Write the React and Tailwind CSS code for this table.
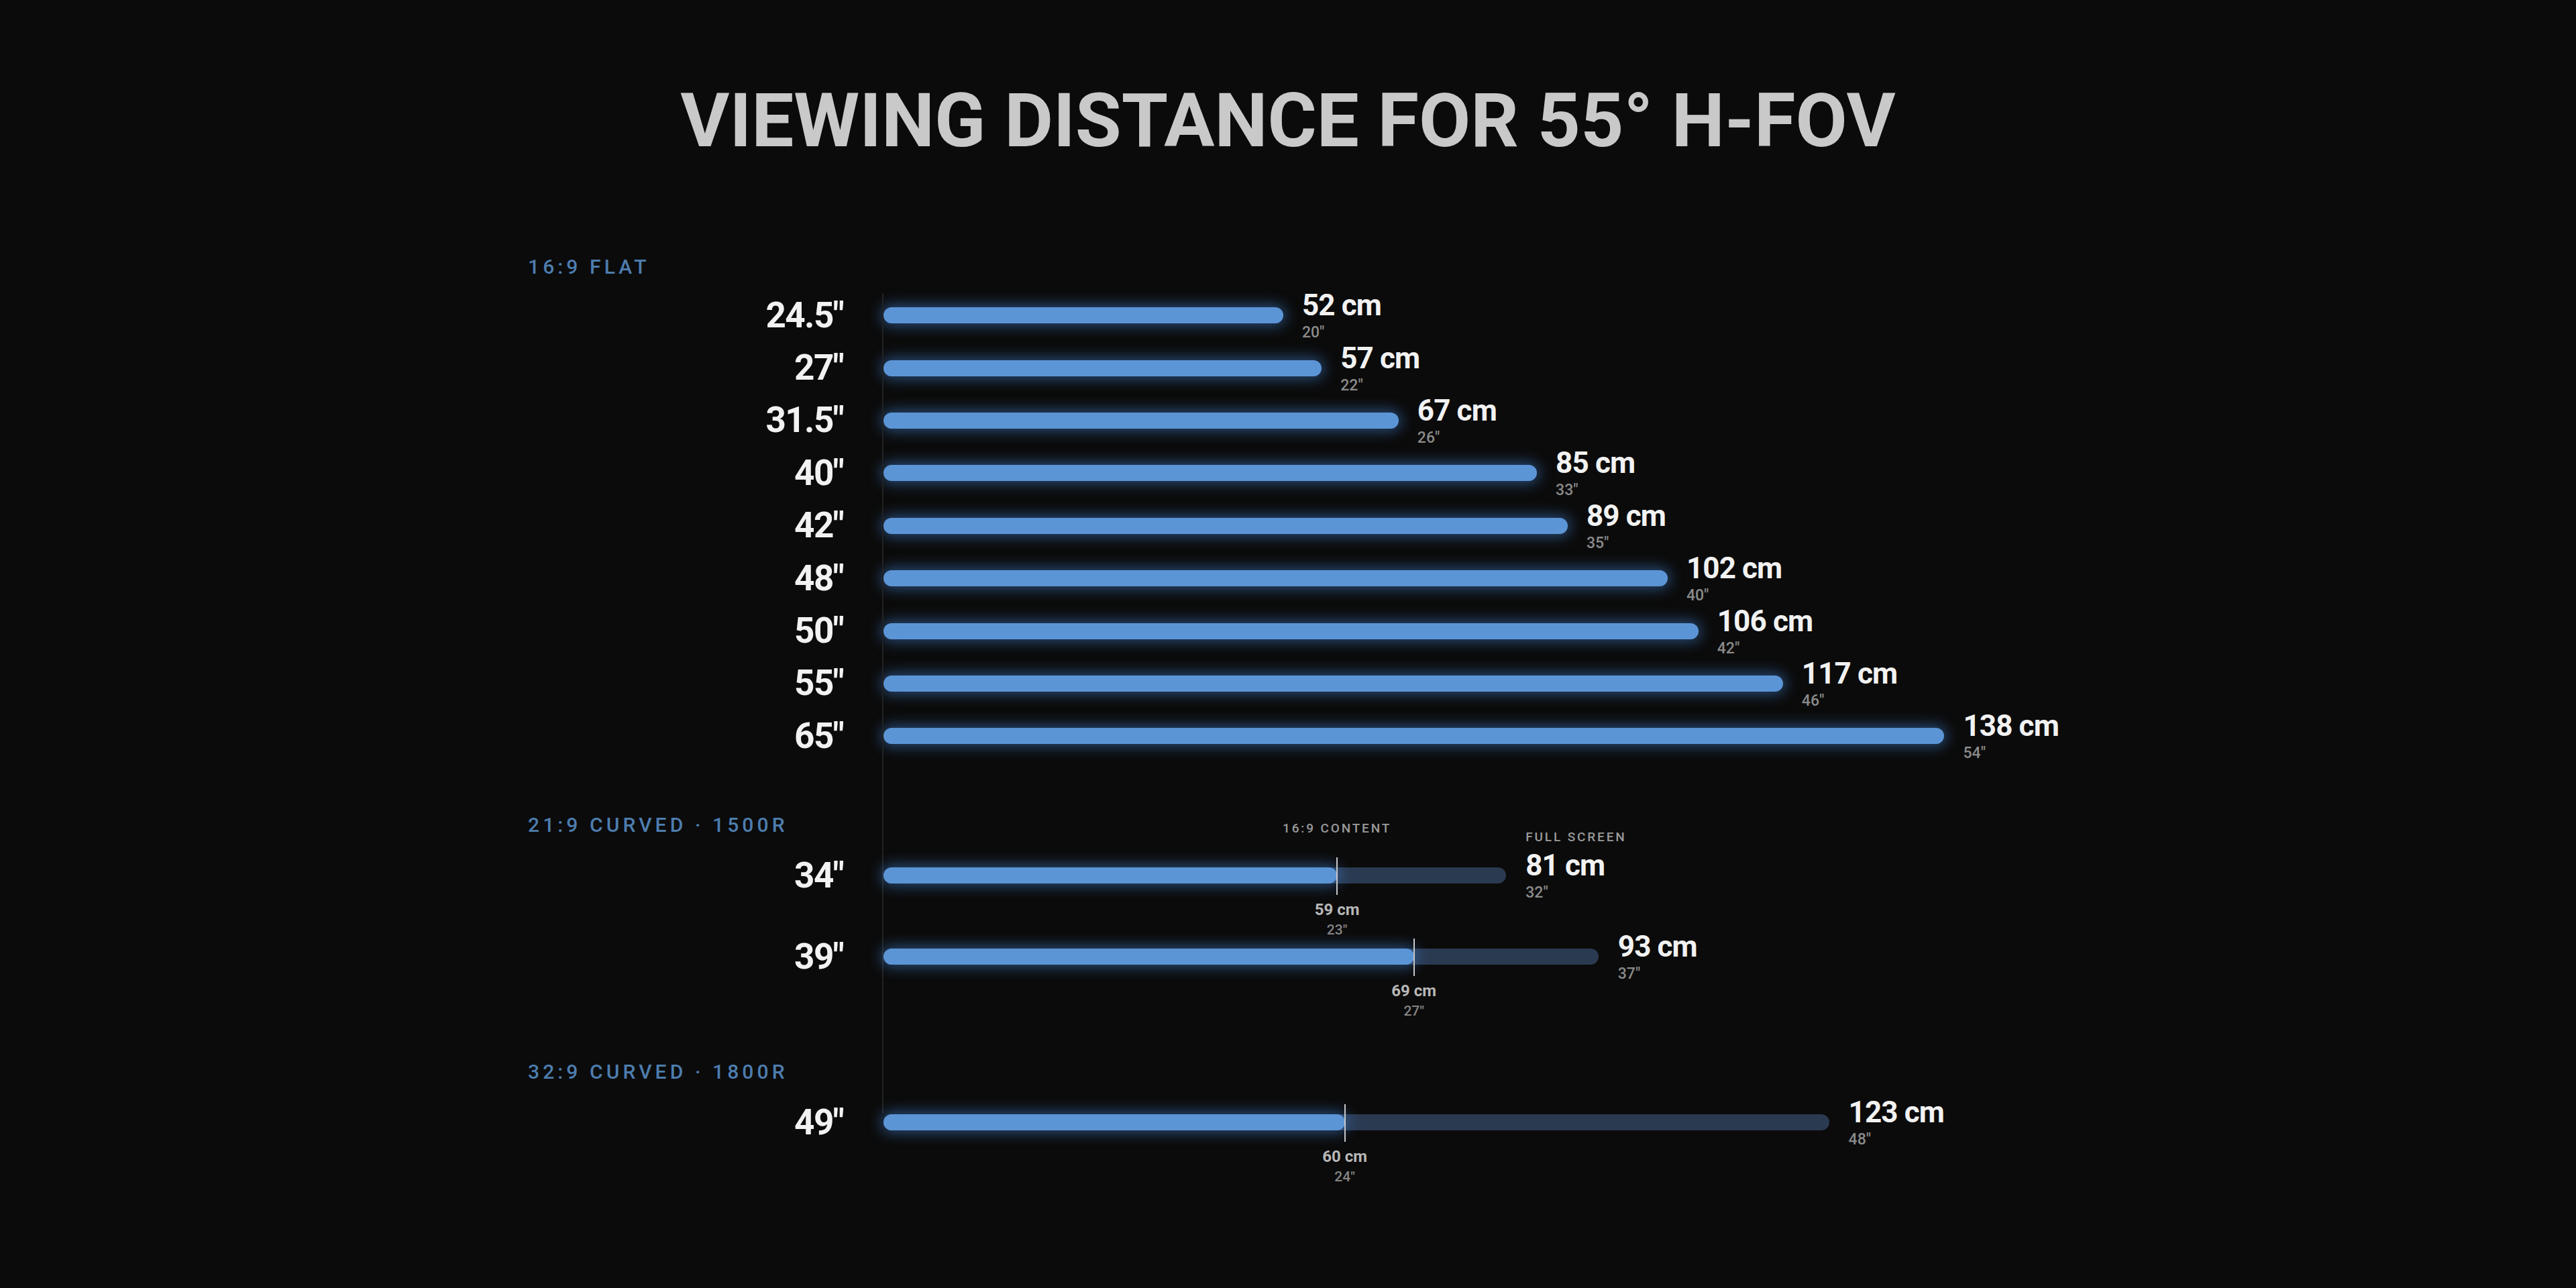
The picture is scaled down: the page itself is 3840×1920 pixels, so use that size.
const PX_PER_CM = 11.46;

const flat = [
  { size: '24.5"', cm: 52, inch: 20 },
  { size: '27"', cm: 57, inch: 22 },
  { size: '31.5"', cm: 67, inch: 26 },
  { size: '40"', cm: 85, inch: 33 },
  { size: '42"', cm: 89, inch: 35 },
  { size: '48"', cm: 102, inch: 40 },
  { size: '50"', cm: 106, inch: 42 },
  { size: '55"', cm: 117, inch: 46 },
  { size: '65"', cm: 138, inch: 54 },
];

const sections = [
  {
    title: '21:9 CURVED · 1500R',
    rows: [
      { size: '34"', cm: 81, inch: 32, partCm: 59, partInch: 23, captions: true },
      { size: '39"', cm: 93, inch: 37, partCm: 69, partInch: 27 },
    ],
  },
  {
    title: '32:9 CURVED · 1800R',
    rows: [{ size: '49"', cm: 123, inch: 48, partCm: 60, partInch: 24 }],
  },
];

function SectionLabel({ children }) {
  return (
    <div className="h-[30px] text-[30px] leading-none font-medium tracking-[0.17em] text-[#4d7dae]">
      {children}
    </div>
  );
}

function SizeLabel({ children }) {
  return (
    <div className="w-[470px] shrink-0 text-right text-[53px] leading-none font-bold tracking-[-0.03em] text-[#f2f2f2]">
      {children}
    </div>
  );
}

function Value({ cm, inch }) {
  return (
    <div className="flex flex-col">
      <div className="text-[44px] leading-none font-bold tracking-[-0.02em] text-[#f2f2f2] whitespace-nowrap">
        {cm} cm
      </div>
      <div className="mt-[7px] text-[23px] leading-none font-medium text-[#8a8a8a]">{inch}″</div>
    </div>
  );
}

function FlatRow({ row }) {
  return (
    <div className="flex items-center h-[78.4px]">
      <SizeLabel>{row.size}</SizeLabel>
      <div className="ml-[60px] flex items-center">
        <div
          className="h-[24px] rounded-full bg-[#5c95d6] shadow-[0_0_20px_4px_rgba(70,140,225,0.5)]"
          style={{ width: row.cm * PX_PER_CM }}
        />
        <div className="ml-[28px]">
          <Value cm={row.cm} inch={row.inch} />
        </div>
      </div>
    </div>
  );
}

function CurvedRow({ row }) {
  const part = row.partCm * PX_PER_CM;
  return (
    <div className="flex items-center h-[121px]">
      <SizeLabel>{row.size}</SizeLabel>
      <div className="ml-[60px] flex items-center">
        <div
          className="relative h-[24px] rounded-full bg-[#2a3a51]"
          style={{ width: row.cm * PX_PER_CM }}
        >
          <div
            className="h-full rounded-full bg-[#5c95d6] shadow-[0_0_20px_4px_rgba(70,140,225,0.5)]"
            style={{ width: part }}
          />
          <div className="absolute top-0 h-full" style={{ left: part }}>
            <div className="absolute left-[-1px] top-[-15px] w-[2px] h-[56px] bg-[#c8c8c8]" />
            {row.captions && (
              <div className="absolute top-[-68px] -translate-x-1/2 text-[19px] leading-none font-medium tracking-[0.15em] text-[#9a9a9a] whitespace-nowrap">
                16:9 CONTENT
              </div>
            )}
            <div className="absolute top-[51px] -translate-x-1/2 flex flex-col items-center whitespace-nowrap">
              <div className="text-[24px] leading-none font-bold text-[#b8b8b8]">{row.partCm} cm</div>
              <div className="mt-[8px] text-[21px] leading-none font-medium text-[#858585]">{row.partInch}″</div>
            </div>
          </div>
        </div>
        <div className="relative ml-[29px]">
          {row.captions && (
            <div className="absolute top-[-30px] left-0 text-[19px] leading-none font-medium tracking-[0.15em] text-[#9a9a9a] whitespace-nowrap">
              FULL SCREEN
            </div>
          )}
          <Value cm={row.cm} inch={row.inch} />
        </div>
      </div>
    </div>
  );
}

export default function App() {
  return (
    <div
      className="w-[3840px] h-[1920px] overflow-hidden bg-[#0b0b0b] flex flex-col"
      style={{ fontFamily: 'Roboto, "Liberation Sans", sans-serif' }}
    >
      <h1 className="mt-[124px] h-[112px] text-center text-[112px] leading-none font-bold text-[#c9c9c9]">
        VIEWING DISTANCE FOR 55° H-FOV
      </h1>

      <div className="relative ml-[787px] mt-[147px]">
        {/* axis */}
        <div className="absolute left-[528px] top-[54px] w-[2px] h-[1222px] bg-[#222222]" />

        <SectionLabel>16:9 FLAT</SectionLabel>
        <div className="mt-[18px]">
          {flat.map((row) => (
            <FlatRow key={row.size} row={row} />
          ))}
        </div>

        {sections.map((s, i) => (
          <div key={s.title} className={i === 0 ? 'mt-[78px]' : 'mt-[96px]'}>
            <SectionLabel>{s.title}</SectionLabel>
            {s.rows.map((row) => (
              <CurvedRow key={row.size} row={row} />
            ))}
          </div>
        ))}
      </div>
    </div>
  );
}
